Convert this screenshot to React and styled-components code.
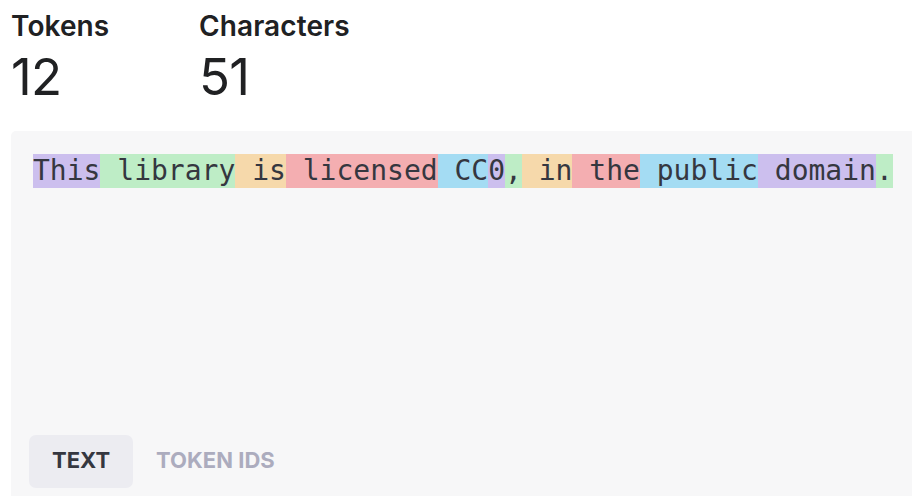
import styled, { createGlobalStyle } from "styled-components";

const GlobalStyle = createGlobalStyle`
    html, body {
        margin: 0;
        padding: 0;
        background: #ffffff;
        overflow: hidden;
    }
    body {
        font-family: Inter, "Noto Sans", sans-serif;
        color: #202123;
    }
`;

const TOKEN_COLORS = [
    "rgba(107, 64, 216, 0.3)",
    "rgba(104, 222, 122, 0.4)",
    "rgba(244, 172, 54, 0.4)",
    "rgba(239, 65, 70, 0.4)",
    "rgba(39, 181, 234, 0.4)",
];

const tokens = [
    "This", " library", " is", " licensed", " CC", "0", ",", " in", " the", " public", " domain", ".",
];

const Page = styled.div`
    display: flex;
    flex-direction: column;
    padding: 7px 0 0 11px;
    width: 100vw;
    height: 100vh;
    box-sizing: border-box;
`;

const Stats = styled.div`
    display: grid;
    grid-template-columns: 188px auto;
`;

const Stat = styled.div`
    display: flex;
    flex-direction: column;
`;

const StatLabel = styled.div`
    font-size: 28px;
    font-weight: 600;
    line-height: 38px;
    letter-spacing: 0.1px;
`;

const StatValue = styled.div`
    margin-top: 2px;
    font-size: 51px;
    font-weight: 400;
    line-height: 60px;
    letter-spacing: -0.8px;
`;

const Panel = styled.div`
    margin-top: 24px;
    flex: 1;
    background: #f7f7f8;
    border-radius: 5px 0 0 0;
    padding: 23px 0 0 22px;
    display: flex;
    flex-direction: column;
`;

const TokenText = styled.div`
    height: 281px;
    font-family: "DejaVu Sans Mono", "Liberation Mono", monospace;
    font-size: 28px;
    line-height: 34px;
    color: #353740;
    white-space: pre;
`;

const Token = styled.span`
    display: inline-block;
    height: 34px;
    background: ${({ $color }) => $color};
`;

const Tabs = styled.div`
    display: flex;
    align-items: center;
    margin-left: -4px;
`;

const Tab = styled.button`
    border: none;
    font-family: Inter, "Noto Sans", sans-serif;
    font-size: 22px;
    font-weight: 700;
    height: 53px;
    padding: 0 23px 4px;
    border-radius: 7px;
    background: ${({ $active }) => ($active ? "#ececf1" : "transparent")};
    color: ${({ $active }) => ($active ? "#353740" : "#acacbe")};
    cursor: pointer;
`;

export default function App() {
    return (
        <>
            <GlobalStyle />
            <Page>
                <Stats>
                    <Stat>
                        <StatLabel>Tokens</StatLabel>
                        <StatValue>12</StatValue>
                    </Stat>
                    <Stat>
                        <StatLabel>Characters</StatLabel>
                        <StatValue>51</StatValue>
                    </Stat>
                </Stats>
                <Panel>
                    <TokenText>
                        {tokens.map((t, i) => (
                            <Token key={i} $color={TOKEN_COLORS[i % TOKEN_COLORS.length]}>
                                {t}
                            </Token>
                        ))}
                    </TokenText>
                    <Tabs>
                        <Tab $active>TEXT</Tab>
                        <Tab>TOKEN IDS</Tab>
                    </Tabs>
                </Panel>
            </Page>
        </>
    );
}
